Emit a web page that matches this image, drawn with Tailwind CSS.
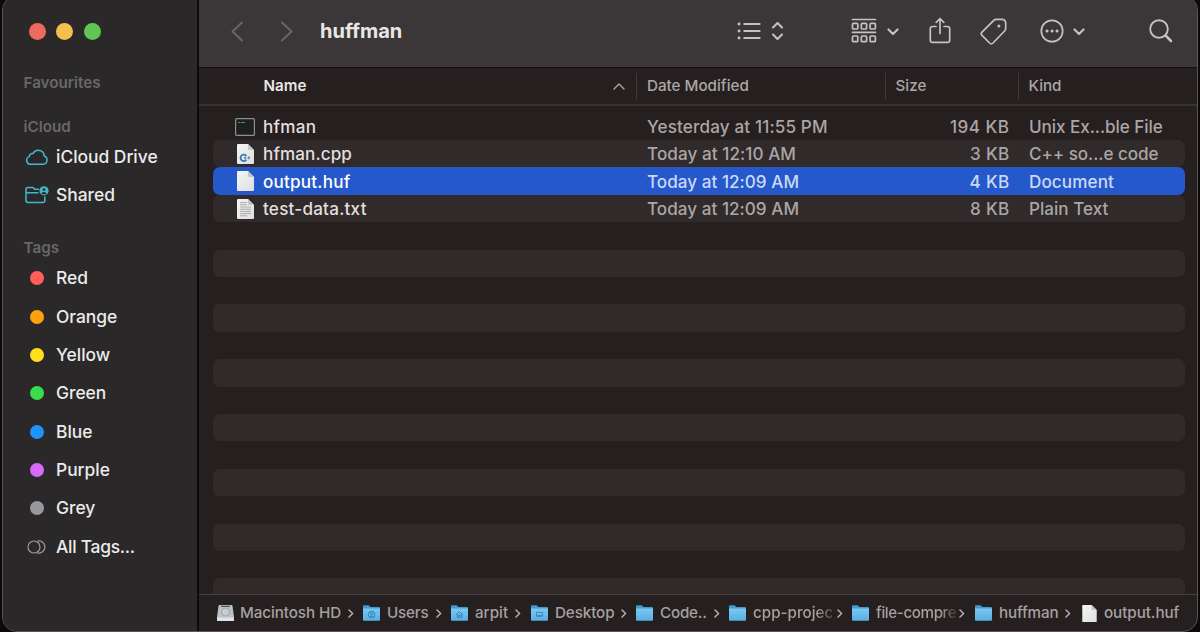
<!DOCTYPE html>
<html lang="en">
<head>
    <meta charset="UTF-8">
    <meta name="viewport" content="width=device-width, initial-scale=1.0">
    <title>huffman</title>
    <script src="https://cdn.jsdelivr.net/npm/@tailwindcss/browser@4"></script>
</head>
<body class="bg-[#0b0909] h-[632px] overflow-hidden font-['Inter',sans-serif]">

    <!-- Shared icons -->
    <svg class="absolute size-0">
        <defs>
            <linearGradient id="blue" x1="0" y1="0" x2="0" y2="1">
                <stop offset="0" stop-color="#7cc8f2"/>
                <stop offset="1" stop-color="#55aee2"/>
            </linearGradient>
            <linearGradient id="paper" x1="0" y1="0" x2="1" y2="1">
                <stop offset="0" stop-color="#f6f6f4"/>
                <stop offset="1" stop-color="#dedede"/>
            </linearGradient>
        </defs>
        <symbol id="folder" viewBox="0 0 17 16">
            <path d="M0 1.2Q0 .2 1 .2H5.6L7.4 2H16Q17 2 17 3V6H0Z" fill="#3f9bd1"/>
            <path d="M0 3.6H17V14.8Q17 15.8 16 15.8H1Q0 15.8 0 14.8Z" fill="url(#blue)"/>
        </symbol>
        <symbol id="doc" viewBox="0 0 17 20">
            <path d="M0 1Q0 0 1 0H11L17 6V19Q17 20 16 20H1Q0 20 0 19Z" fill="url(#paper)"/>
            <path d="M11 0L17 6H12Q11 6 11 5Z" fill="#c4c6ca"/>
        </symbol>
        <symbol id="chevron" viewBox="0 0 6 9">
            <path d="M1 1L4.6 4.5L1 8" fill="none" stroke="#b5b0b0" stroke-width="1.5" stroke-linecap="round" stroke-linejoin="round"/>
        </symbol>
        <symbol id="down" viewBox="0 0 12 8">
            <path d="M1.5 1.5L6 6L10.5 1.5" fill="none" stroke="#c5c1c1" stroke-width="2.2" stroke-linecap="round" stroke-linejoin="round"/>
        </symbol>
    </svg>

    <!-- Finder window -->
    <div class="flex ml-[2px] -mt-[5px] w-[1196px] h-[637px] rounded-[15px] border border-[#5a5657] overflow-hidden bg-[#251f20]">

        <!-- Sidebar -->
        <aside class="w-[196px] shrink-0 bg-[#2a2829] border-r-2 border-[#0d0b0b] pt-[27px] text-[#ecebeb] text-[17.4px] font-[450]">
            <div class="flex gap-[10.5px] pl-[25.5px] h-[17px]">
                <span class="size-[17px] rounded-full bg-[#ed6a5e]"></span>
                <span class="size-[17px] rounded-full bg-[#f5bf4f]"></span>
                <span class="size-[17px] rounded-full bg-[#61c554]"></span>
            </div>
            <h2 class="mt-[33px] h-[20px] pl-[20.5px] text-[15.2px] leading-[20px] font-semibold text-[#696768]">Favourites</h2>
            <h2 class="mt-[24px] h-[20px] pl-[20.5px] text-[15.2px] leading-[20px] font-semibold text-[#696768]">iCloud</h2>
            <ul class="mt-[1px]">
                <li class="flex items-center h-[38.4px] pl-[22px]">
                    <svg class="w-[24px] h-[18px] mr-[7px]" viewBox="0 0 24 18" fill="none" stroke="#41b9cd" stroke-width="1.5">
                        <path d="M6 16.3H17.8A4.3 4.3 0 0 0 19.3 8A6 6 0 0 0 8 5.6A3.6 3.6 0 0 0 4.2 8.6A4 4 0 0 0 6 16.3Z" stroke-linejoin="round"/>
                    </svg>
                    <span>iCloud Drive</span>
                </li>
                <li class="flex items-center h-[38.4px] pl-[22px] pb-[1px]">
                    <svg class="w-[24px] h-[18px] mr-[7px]" viewBox="0 0 24 18" fill="none" stroke="#41b9cd" stroke-width="1.5">
                        <path d="M14 3.3H9.5L8 1.6H3Q1 1.6 1 3.6V14.4Q1 16.4 3 16.4H17.8Q19.8 16.4 19.8 14.4V10.5M1 6.7H13.5"/>
                        <circle cx="19" cy="4.8" r="4.6" fill="#41b9cd" stroke="none"/>
                        <circle cx="19" cy="3.6" r="1.4" fill="#2a2829" stroke="none"/>
                        <path d="M16.4 7.4Q19 4.8 21.6 7.4Q19 9.2 16.4 7.4Z" fill="#2a2829" stroke="none"/>
                    </svg>
                    <span>Shared</span>
                </li>
            </ul>
            <h2 class="mt-[23.3px] h-[20px] pl-[20.5px] text-[15.2px] leading-[20px] font-semibold text-[#696768]">Tags</h2>
            <ul class="mt-[1px]">
                <li class="flex items-center h-[38.35px] pl-[27px] gap-[12px]"><span class="size-[14px] rounded-full bg-[#ff5f57]"></span>Red</li>
                <li class="flex items-center h-[38.35px] pl-[27px] gap-[12px]"><span class="size-[14px] rounded-full bg-[#ffa10f]"></span>Orange</li>
                <li class="flex items-center h-[38.35px] pl-[27px] gap-[12px]"><span class="size-[14px] rounded-full bg-[#ffe01a]"></span>Yellow</li>
                <li class="flex items-center h-[38.35px] pl-[27px] gap-[12px]"><span class="size-[14px] rounded-full bg-[#38dc4c]"></span>Green</li>
                <li class="flex items-center h-[38.35px] pl-[27px] gap-[12px]"><span class="size-[14px] rounded-full bg-[#1e93ff]"></span>Blue</li>
                <li class="flex items-center h-[38.35px] pl-[27px] gap-[12px]"><span class="size-[14px] rounded-full bg-[#d969fb]"></span>Purple</li>
                <li class="flex items-center h-[38.35px] pl-[27px] gap-[12px]"><span class="size-[14px] rounded-full bg-[#98979c]"></span>Grey</li>
                <li class="flex items-center h-[38.35px] pl-[24px] gap-[10px] tracking-[-0.25px]">
                    <svg class="w-[19px] h-[14px]" viewBox="0 0 19 14" fill="none" stroke="#9b999a" stroke-width="1.2">
                        <circle cx="7" cy="7" r="6"/>
                        <path d="M10.4 1.2A6 6 0 1 1 10.4 12.8"/>
                    </svg>
                    All Tags...
                </li>
            </ul>
        </aside>

        <main class="flex flex-col flex-1 min-w-0">
            <!-- Toolbar -->
            <header class="flex items-center h-[72px] shrink-0 pl-[32px] pb-[1px] bg-[#3b3637] border-b border-[#120f0f]">
                <svg class="w-[13px] h-[21px]" viewBox="0 0 13 21" fill="none" stroke="#6a6566" stroke-width="2" stroke-linecap="round" stroke-linejoin="round"><path d="M11 1.5L1.5 10.5L11 19.5"/></svg>
                <svg class="w-[13px] h-[21px] ml-[36px]" viewBox="0 0 13 21" fill="none" stroke="#6a6566" stroke-width="2" stroke-linecap="round" stroke-linejoin="round"><path d="M2 1.5L11.5 10.5L2 19.5"/></svg>
                <h1 class="ml-[27px] w-[417px] text-[20px] font-bold text-[#e9e6e6]">huffman</h1>
                <svg class="w-[24px] h-[18px]" viewBox="0 0 24 18" fill="none" stroke="#c5c1c1" stroke-width="1.9" stroke-linecap="round">
                    <path d="M7.2 2H22.7M7.2 9H22.7M7.2 16H22.7"/>
                    <path d="M2 2H2.1M2 9H2.1M2 16H2.1" stroke-width="2.8"/>
                </svg>
                <svg class="w-[13px] h-[20px] ml-[10px]" viewBox="0 0 13 20" fill="none" stroke="#c5c1c1" stroke-width="2.1" stroke-linecap="round" stroke-linejoin="round"><path d="M2 6.5L6.5 2L11 6.5M2 13.5L6.5 18L11 13.5"/></svg>
                <svg class="w-[26px] h-[26px] ml-[67px]" viewBox="0 0 26 26" fill="none" stroke="#c5c1c1" stroke-width="1.7" stroke-linecap="round">
                    <path d="M1.5 1.5H24.5M1.5 14.3H24.5"/>
                    <rect x="1.5" y="5.3" width="5.3" height="5.7" rx="1"/><rect x="10.3" y="5.3" width="5.3" height="5.7" rx="1"/><rect x="19.1" y="5.3" width="5.3" height="5.7" rx="1"/>
                    <rect x="1.5" y="18" width="5.3" height="5.7" rx="1"/><rect x="10.3" y="18" width="5.3" height="5.7" rx="1"/><rect x="19.1" y="18" width="5.3" height="5.7" rx="1"/>
                </svg>
                <svg class="w-[12px] h-[8px] ml-[10px] mt-[2px]"><use href="#down"/></svg>
                <svg class="w-[22px] h-[27px] ml-[30px] -mt-px" viewBox="0 0 22 27" fill="none" stroke="#c5c1c1" stroke-width="1.7" stroke-linecap="round" stroke-linejoin="round">
                    <path d="M7 9.5H3.5Q1.3 9.5 1.3 11.7V23.2Q1.3 25.4 3.5 25.4H18.5Q20.7 25.4 20.7 23.2V11.7Q20.7 9.5 18.5 9.5H15M11 16.5V1.8M7.2 5.3L11 1.5L14.8 5.3"/>
                </svg>
                <svg class="w-[27px] h-[27px] ml-[29px] mr-px" viewBox="0 0 27 27" fill="none" stroke="#c5c1c1" stroke-width="1.7" stroke-linejoin="round">
                    <path d="M13.8 2.4Q14.8 1.3 16.4 1.3H21.6Q25.7 1.3 25.7 5.4V10.2Q25.7 11.9 24.6 13L13 25Q11.3 26.6 9.6 25L2 17.4Q.4 15.7 2 14.1Z"/>
                    <circle cx="18.9" cy="8" r="1.5" fill="#c5c1c1" stroke="none"/>
                </svg>
                <svg class="w-[24px] h-[24px] ml-[32px]" viewBox="0 0 24 24" fill="none" stroke="#c5c1c1" stroke-width="1.7">
                    <circle cx="12" cy="12" r="10.7"/>
                    <path d="M7 12H7.1M12 12H12.1M17 12H17.1" stroke-width="3" stroke-linecap="round"/>
                </svg>
                <svg class="w-[12px] h-[8px] ml-[9px] mt-[2px]"><use href="#down"/></svg>
                <svg class="w-[24px] h-[24px] ml-[64px]" viewBox="0 0 24 24" fill="none" stroke="#c5c1c1" stroke-linecap="round">
                    <circle cx="10" cy="10" r="8.8" stroke-width="1.9"/>
                    <path d="M16.7 16.7L22 22" stroke-width="2.6"/>
                </svg>
            </header>

            <!-- Column titles -->
            <div class="flex items-center h-[38px] shrink-0 border-b-2 border-[#383333] text-[15.2px] font-medium text-[#aba7a7]">
                <div class="flex items-center justify-between w-[438px] h-[27px] pl-[64.5px] pr-[11px] border-r border-[#3f3a3a]">
                    <span class="font-semibold text-[#e9e6e6]">Name</span>
                    <svg class="w-[12px] h-[7px] mt-px" viewBox="0 0 12 7" fill="none" stroke="#aba7a7" stroke-width="1.4" stroke-linecap="round" stroke-linejoin="round"><path d="M1 6L6 1L11 6"/></svg>
                </div>
                <div class="flex items-center w-[249px] h-[27px] pl-[10px] border-r border-[#3f3a3a]">Date Modified</div>
                <div class="flex items-center w-[133px] h-[27px] pl-[9.5px] border-r border-[#3f3a3a]">Size</div>
                <div class="flex items-center h-[27px] pl-[9.5px]">Kind</div>
            </div>

            <!-- File list -->
            <div class="flex-1 min-h-0 overflow-hidden pl-[14px] pr-[12px] pt-[6.6px] text-[17.1px] font-[450] text-[#aaa6a6]">
                <div class="flex items-center h-[27.43px] pt-[1.5px] rounded-[7px]">
                    <svg class="w-[20px] h-[18px] ml-[22px] -mt-px" viewBox="0 0 20 18">
                        <rect x=".6" y=".6" width="18.8" height="16.8" rx="1" fill="#1c201e" stroke="#8e8e8e" stroke-width="1.2"/>
                        <path d="M3 4.5H5.5M6.2 4.5H10" stroke="#3f9b55" stroke-width="1.2"/>
                    </svg>
                    <span class="ml-[8px] w-[384px] text-[#e2dfdf] tracking-[0.25px]">hfman</span>
                    <span class="w-[240px] tracking-[0.14px]">Yesterday at 11:55 PM</span>
                    <span class="w-[122.5px] text-right tracking-[0.5px]">194 KB</span>
                    <span class="ml-[19.5px] tracking-[-0.06px]">Unix Ex...ble File</span>
                </div>
                <div class="flex items-center h-[27.43px] pt-[1px] rounded-[7px] bg-[#302a2b]">
                    <svg class="w-[17px] h-[20px] ml-[24px] mr-[1px] -mt-[1px]" viewBox="0 0 17 20">
                        <use href="#doc" width="17" height="20"/>
                        <path d="M9.4 12A3.2 3.2 0 1 0 9.4 15.6" fill="none" stroke="#3d7fb5" stroke-width="1.9"/>
                        <path d="M7 13.8H9.4M8.2 12.6V15M10.4 13.8H13.2M11.8 12.4V15.2" stroke="#3d7fb5" stroke-width="1"/>
                    </svg>
                    <span class="ml-[8px] w-[384px] text-[#e2dfdf] tracking-[0.1px]">hfman.cpp</span>
                    <span class="w-[240px] tracking-[0.07px]">Today at 12:10 AM</span>
                    <span class="w-[122.5px] text-right tracking-[0.3px]">3 KB</span>
                    <span class="ml-[19.5px] tracking-[-0.06px]">C++ so...e code</span>
                </div>
                <div class="flex items-center h-[27.43px] pt-[1.5px] rounded-[7px] bg-[#2458cb] text-[#ccd9f4]">
                    <svg class="w-[17px] h-[20px] ml-[24px] mr-[1px] -mt-[2px]"><use href="#doc"/></svg>
                    <span class="ml-[8px] w-[384px] text-white tracking-[0.2px]">output.huf</span>
                    <span class="w-[240px] tracking-[0.03px]">Today at 12:09 AM</span>
                    <span class="w-[122.5px] text-right tracking-[0.3px]">4 KB</span>
                    <span class="ml-[19.5px] tracking-[0.1px]">Document</span>
                </div>
                <div class="flex items-center h-[27.43px] pt-[1px] rounded-[7px] bg-[#302a2b]">
                    <svg class="w-[17px] h-[20px] ml-[24px] mr-[1px] -mt-[1px]" viewBox="0 0 17 20">
                        <use href="#doc" width="17" height="20"/>
                        <path d="M3 3.5H10M3 5.7H10M3 8H14M3 10.2H14M3 12.4H14M3 14.6H14M3 16.8H10" stroke="#a3a3a3" stroke-width=".9"/>
                    </svg>
                    <span class="ml-[8px] w-[384px] text-[#e2dfdf] tracking-[0.22px]">test-data.txt</span>
                    <span class="w-[240px] tracking-[0.03px]">Today at 12:09 AM</span>
                    <span class="w-[122.5px] text-right tracking-[0.3px]">8 KB</span>
                    <span class="ml-[19.5px]">Plain Text</span>
                </div>
                <!-- Empty striped rows -->
                <div class="mt-[27.4px] h-[27.4px] rounded-[7px] bg-[#302a2b]"></div>
                <div class="mt-[27.4px] h-[27.4px] rounded-[7px] bg-[#302a2b]"></div>
                <div class="mt-[27.4px] h-[27.4px] rounded-[7px] bg-[#302a2b]"></div>
                <div class="mt-[27.4px] h-[27.4px] rounded-[7px] bg-[#302a2b]"></div>
                <div class="mt-[27.4px] h-[27.4px] rounded-[7px] bg-[#302a2b]"></div>
                <div class="mt-[27.4px] h-[27.4px] rounded-[7px] bg-[#302a2b]"></div>
                <div class="mt-[27.4px] h-[27.4px] rounded-[7px] bg-[#302a2b]"></div>
            </div>

            <!-- Path bar -->
            <footer class="flex items-center h-[37px] shrink-0 pl-[18px] pt-px border-t border-[#454040] text-[15.2px] font-[450] text-[#a5a1a1] whitespace-nowrap">
                <div class="flex items-center w-[146px] shrink-0">
                    <svg class="w-[17px] h-[17px] mr-[6px]" viewBox="0 0 17 17">
                        <path d="M1.5 1Q1.7 0 2.7 0H14.3Q15.3 0 15.5 1L17 12V15Q17 16 16 16H1Q0 16 0 15V12Z" fill="#b9c3c8"/>
                        <path d="M0 12.5H17V15Q17 16 16 16H1Q0 16 0 15Z" fill="#dce4e8"/>
                        <circle cx="8.5" cy="7" r="4" fill="#c6ced2" stroke="#929ca1" stroke-width=".8"/>
                        <path d="M4 1.4H13" stroke="#4e5457" stroke-width="1.4"/>
                    </svg>
                    <span class="flex-1 tracking-[-0.08px]">Macintosh HD</span>
                    <svg class="w-[6px] h-[9px] mr-[9px]"><use href="#chevron"/></svg>
                </div>
                <div class="flex items-center w-[88px] shrink-0">
                    <svg class="w-[17px] h-[16px] mr-[7px]" viewBox="0 0 17 16"><use href="#folder"/><g fill="none" stroke="#3482b8" stroke-width="1"><circle cx="8.5" cy="9.5" r="3.3"/><circle cx="8.5" cy="8.7" r="1"/><path d="M6.5 11.8Q8.5 9.8 10.5 11.8"/></g></svg>
                    <span class="flex-1 tracking-[-0.2px]">Users</span>
                    <svg class="w-[6px] h-[9px] mr-[9px]"><use href="#chevron"/></svg>
                </div>
                <div class="flex items-center w-[80px] shrink-0">
                    <svg class="w-[17px] h-[16px] mr-[7px]" viewBox="0 0 17 16"><use href="#folder"/><path d="M5.3 9.5L8.5 6.7L11.7 9.5M6.3 9V12.6H7.8V10.5H9.2V12.6H10.7V9" fill="none" stroke="#3482b8" stroke-width="1"/></svg>
                    <span class="flex-1">arpit</span>
                    <svg class="w-[6px] h-[9px] mr-[10px]"><use href="#chevron"/></svg>
                </div>
                <div class="flex items-center w-[105px] shrink-0">
                    <svg class="w-[17px] h-[16px] mr-[7px]" viewBox="0 0 17 16"><use href="#folder"/><path d="M5.5 7.3H11.5V11.3H5.5ZM6.5 10.5H10.5" fill="none" stroke="#3482b8" stroke-width=".9"/></svg>
                    <span class="flex-1 tracking-[-0.1px]">Desktop</span>
                    <svg class="w-[6px] h-[9px] mr-[9px]"><use href="#chevron"/></svg>
                </div>
                <div class="flex items-center w-[93px] shrink-0">
                    <svg class="w-[17px] h-[16px] mr-[7px]"><use href="#folder"/></svg>
                    <span class="flex-1 tracking-[-0.2px]">Code..</span>
                    <svg class="w-[6px] h-[9px] mr-[9px]"><use href="#chevron"/></svg>
                </div>
                <div class="flex items-center w-[123px] shrink-0">
                    <svg class="w-[17px] h-[16px] mr-[7px]"><use href="#folder"/></svg>
                    <span class="w-[79px] mr-[5px] mask-r-from-80% mask-r-to-110%">cpp-projec</span>
                    <svg class="w-[6px] h-[9px]"><use href="#chevron"/></svg>
                </div>
                <div class="flex items-center w-[123px] shrink-0">
                    <svg class="w-[17px] h-[16px] mr-[7px]"><use href="#folder"/></svg>
                    <span class="w-[80px] mr-[3px] tracking-[-0.4px] mask-r-from-80% mask-r-to-105%">file-compre</span>
                    <svg class="w-[6px] h-[9px]"><use href="#chevron"/></svg>
                </div>
                <div class="flex items-center w-[107px] shrink-0">
                    <svg class="w-[17px] h-[16px] mr-[7px]"><use href="#folder"/></svg>
                    <span class="flex-1 tracking-[-0.15px]">huffman</span>
                    <svg class="w-[6px] h-[9px] mr-[11px]"><use href="#chevron"/></svg>
                </div>
                <div class="flex items-center shrink-0">
                    <svg class="w-[15px] h-[17px] mr-[7px]"><use href="#doc"/></svg>
                    <span class="tracking-[-0.05px]">output.huf</span>
                </div>
            </footer>
        </main>
    </div>

</body>
</html>
